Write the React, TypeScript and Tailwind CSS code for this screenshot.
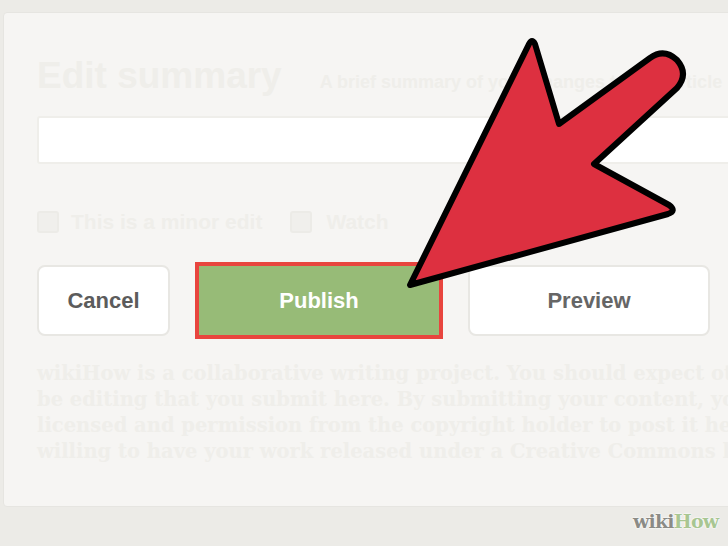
import React from "react";

export default function App() {
  return (
    <div
      className="relative w-[728px] h-[546px] overflow-hidden bg-[#ecebe7]"
      style={{ fontFamily: '"Liberation Sans", Arial, sans-serif' }}
    >
      <div className="mt-[12px] ml-[3px] w-[780px] h-[495px] overflow-hidden bg-[#f6f5f3] border border-[#e6e5e1] rounded-tl-[4px] rounded-bl-[4px] pl-[33px] pt-[45px]">
        <div className="flex items-baseline gap-[38px] h-[36px] whitespace-nowrap">
          <span className="text-[37px] leading-[36px] font-bold text-[#efeeea]">Edit summary</span>
          <span className="text-[18px] font-bold text-[#efeeea]">A brief summary of your changes to this article</span>
        </div>
        <div className="mt-[22px] h-[48px] w-[720px] bg-white border-2 border-[#efeeea] rounded-[3px]" />
        <div className="mt-[46px] h-[24px] flex items-center whitespace-nowrap text-[21px] font-bold text-[#efeeea]">
          <span className="w-[22px] h-[22px] rounded-[3px] border-2 border-[#ecebe7] bg-[#f0efec]" />
          <span className="ml-[12px]">This is a minor edit</span>
          <span className="ml-[28px] w-[22px] h-[22px] rounded-[3px] border-2 border-[#ecebe7] bg-[#f0efec]" />
          <span className="ml-[14px]">Watch</span>
        </div>
        <div className="mt-[28px] h-[77px] flex items-center">
          <div className="w-[133px] h-[71px] flex items-center justify-center bg-white border-2 border-[#e8e7e3] rounded-[8px] text-[22px] font-bold text-[#5c5c5c]">
            Cancel
          </div>
          <div className="ml-[25px] w-[248px] h-[77px] flex items-center justify-center bg-[#97bb77] border-[4px] border-[#e8453e] text-[22px] font-bold text-white">
            Publish
          </div>
          <div className="ml-[25px] w-[242px] h-[71px] flex items-center justify-center bg-white border-2 border-[#e8e7e3] rounded-[8px] text-[22px] font-bold text-[#666666]">
            Preview
          </div>
        </div>
        <div
          className="mt-[22px] text-[19.5px] leading-[26px] font-bold text-[#efeeea] whitespace-nowrap"
          style={{ fontFamily: '"DejaVu Serif", "Liberation Serif", serif' }}
        >
          <div>wikiHow is a collaborative writing project. You should expect others to</div>
          <div>be editing that you submit here. By submitting your content, you agree</div>
          <div>licensed and permission from the copyright holder to post it here, if you are</div>
          <div>willing to have your work released under a Creative Commons license.</div>
        </div>
      </div>
      <div
        className="absolute left-[633px] top-[512px] text-[19px] font-bold leading-none"
        style={{
          fontFamily: '"DejaVu Serif", "Liberation Serif", serif',
          textShadow: "0 0 2px #ffffff, 0 0 2px #ffffff",
          letterSpacing: "-0.8px",
        }}
      >
        <span className="text-[#8b8b86]">wiki</span>
        <span className="text-[#a8c692]">How</span>
      </div>
      <svg
        className="absolute left-0 top-0"
        width="728"
        height="546"
        viewBox="0 0 728 546"
      >
        <path
          d="M 410 285 L 529 44 Q 532 38 535 44 L 559 124 L 650 58 Q 664 48 677 60 Q 689 74 677 88 L 594 164 L 669 205 Q 677 211 668 214 L 410 285 Z"
          fill="#dd3040"
          stroke="#000000"
          strokeWidth="6"
          strokeLinejoin="round"
        />
      </svg>
    </div>
  );
}
